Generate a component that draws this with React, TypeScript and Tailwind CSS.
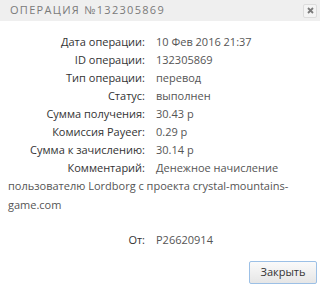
import React from 'react';

const rows: [string, string][] = [
  ['Дата операции:', '10 Фев 2016 21:37'],
  ['ID операции:', '132305869'],
  ['Тип операции:', 'перевод'],
  ['Статус:', 'выполнен'],
  ['Сумма получения:', '30.43 р'],
  ['Комиссия Payeer:', '0.29 р'],
  ['Сумма к зачислению:', '30.14 р'],
  ['Комментарий:', 'Денежное начисление'],
];

const App: React.FC = () => {
  return (
    <div className="w-[320px] h-[290px] bg-white overflow-hidden font-['Open_Sans',sans-serif] text-[11px]">
      {/* Header */}
      <div className="h-[21px] bg-[#efefef] flex items-center justify-between pl-[10px] pr-[3px]">
        <span className="text-[#7a7a7a] text-[11px] tracking-[1.3px] font-medium">ОПЕРАЦИЯ №132305869</span>
        <button className="w-[14px] h-[14px] border border-[#dcdcdc] rounded-[2px] bg-[#f4f4f4] flex items-center justify-center">
          <svg width="7" height="7" viewBox="0 0 7 7">
            <path d="M1 1L6 6M6 1L1 6" stroke="#7a7a7a" strokeWidth="1.8" />
          </svg>
        </button>
      </div>

      {/* Body */}
      <div className="pt-[12px] px-[8px]">
        {rows.map(([label, value]) => (
          <div key={label} className="flex h-[18px] items-center">
            <span className="w-[137px] text-right text-[#333]">{label}</span>
            <span className="ml-[11px] text-[#555]">{value}</span>
          </div>
        ))}
        <p className="leading-[18.5px] text-[#555]">
          пользователю Lordborg с проекта crystal-mountains-game.com
        </p>
        <div className="flex h-[18px] items-center mt-[17px]">
          <span className="w-[137px] text-right text-[#333]">От:</span>
          <span className="ml-[11px] text-[#555]">P26620914</span>
        </div>
        <div className="flex justify-end mt-[12px]">
          <button className="w-[68px] h-[23px] border border-[#9cc0e6] rounded-[2px] bg-gradient-to-b from-[#fafafa] to-[#e6e6e6] text-[#333] text-[11px] mr-[-5px]">
            Закрыть
          </button>
        </div>
      </div>
    </div>
  );
};

export default App;
